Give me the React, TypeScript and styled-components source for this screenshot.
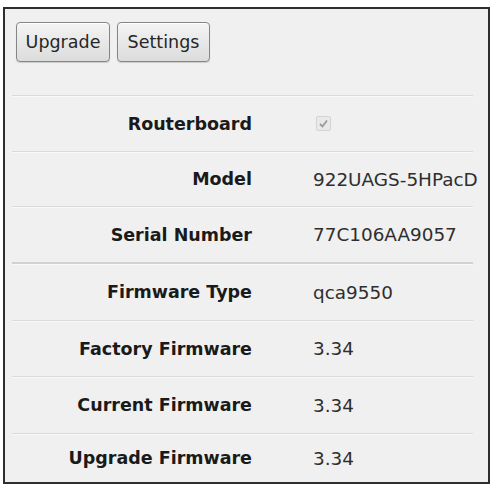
import React from "react";
import styled, { createGlobalStyle } from "styled-components";

const Global = createGlobalStyle`
  html, body {
    margin: 0;
    padding: 0;
    background: #ffffff;
  }
  body {
    font-family: "DejaVu Sans", Verdana, sans-serif;
  }
`;

const Frame = styled.div`
  box-sizing: border-box;
  margin: 7px 0 0 3px;
  width: 487px;
  height: 477px;
  border: 2px solid #2e2e2e;
  background: #f0f0f0;
  display: flex;
  flex-direction: column;
  overflow: hidden;
`;

const Toolbar = styled.div`
  box-sizing: border-box;
  height: 87px;
  padding: 13px 0 0 11px;
  display: flex;
  align-items: flex-start;
  gap: 7px;
`;

const Button = styled.button<{ $w: number }>`
  box-sizing: border-box;
  height: 40px;
  width: ${(p) => p.$w}px;
  padding: 0;
  border: 1px solid #858585;
  border-radius: 4px;
  background: linear-gradient(#f4f4f4, #dcdcdc);
  box-shadow: inset 0 1px 0 #ffffff, 0 1px 1px rgba(0, 0, 0, 0.15);
  font-family: "DejaVu Sans", Verdana, sans-serif;
  font-size: 17.5px;
  color: #262626;
  display: flex;
  align-items: center;
  justify-content: center;
`;

const Table = styled.div`
  margin: 0 15px 0 7px;
  display: flex;
  flex-direction: column;
`;

const Row = styled.div<{ $section?: boolean; $h: number }>`
  box-sizing: border-box;
  height: ${(p) => p.$h}px;
  display: grid;
  grid-template-columns: 240px 1fr;
  column-gap: 61px;
  align-items: center;
  border-top: ${(p) => (p.$section ? "2px solid #d2d2d2" : "1px solid #dadada")};
  box-shadow: inset 0 1px 0 #f9f9f9;
`;

const Label = styled.div`
  text-align: right;
  font-weight: bold;
  font-size: 17.5px;
  color: #1a1a1a;
  white-space: nowrap;
`;

const Value = styled.div`
  font-size: 18.4px;
  color: #2e2e2e;
  white-space: nowrap;
`;

const Check = styled.span`
  box-sizing: border-box;
  width: 15px;
  height: 15px;
  margin-left: 3px;
  border: 1px solid #d4d4d4;
  border-radius: 2px;
  background: #e9e9e9;
  display: flex;
  align-items: center;
  justify-content: center;
`;

type Item = { label: string; value?: string; check?: boolean; section?: boolean; h: number };

const items: Item[] = [
  { label: "Routerboard", check: true, h: 56 },
  { label: "Model", value: "922UAGS-5HPacD", h: 55 },
  { label: "Serial Number", value: "77C106AA9057", h: 56 },
  { label: "Firmware Type", value: "qca9550", section: true, h: 58 },
  { label: "Factory Firmware", value: "3.34", h: 56 },
  { label: "Current Firmware", value: "3.34", h: 57 },
  { label: "Upgrade Firmware", value: "3.34", h: 49 },
];

export default function App() {
  return (
    <>
      <Global />
      <Frame>
        <Toolbar>
          <Button $w={94}>Upgrade</Button>
          <Button $w={93}>Settings</Button>
        </Toolbar>
        <Table>
          {items.map((it) => (
            <Row key={it.label} $section={it.section} $h={it.h}>
              <Label>{it.label}</Label>
              {it.check ? (
                <Check>
                  <svg width="11" height="11" viewBox="0 0 11 11">
                    <path
                      d="M2 6 L4.5 8.5 L9 2.5"
                      fill="none"
                      stroke="#9a9a9a"
                      strokeWidth="1.8"
                    />
                  </svg>
                </Check>
              ) : (
                <Value>{it.value}</Value>
              )}
            </Row>
          ))}
        </Table>
      </Frame>
    </>
  );
}
